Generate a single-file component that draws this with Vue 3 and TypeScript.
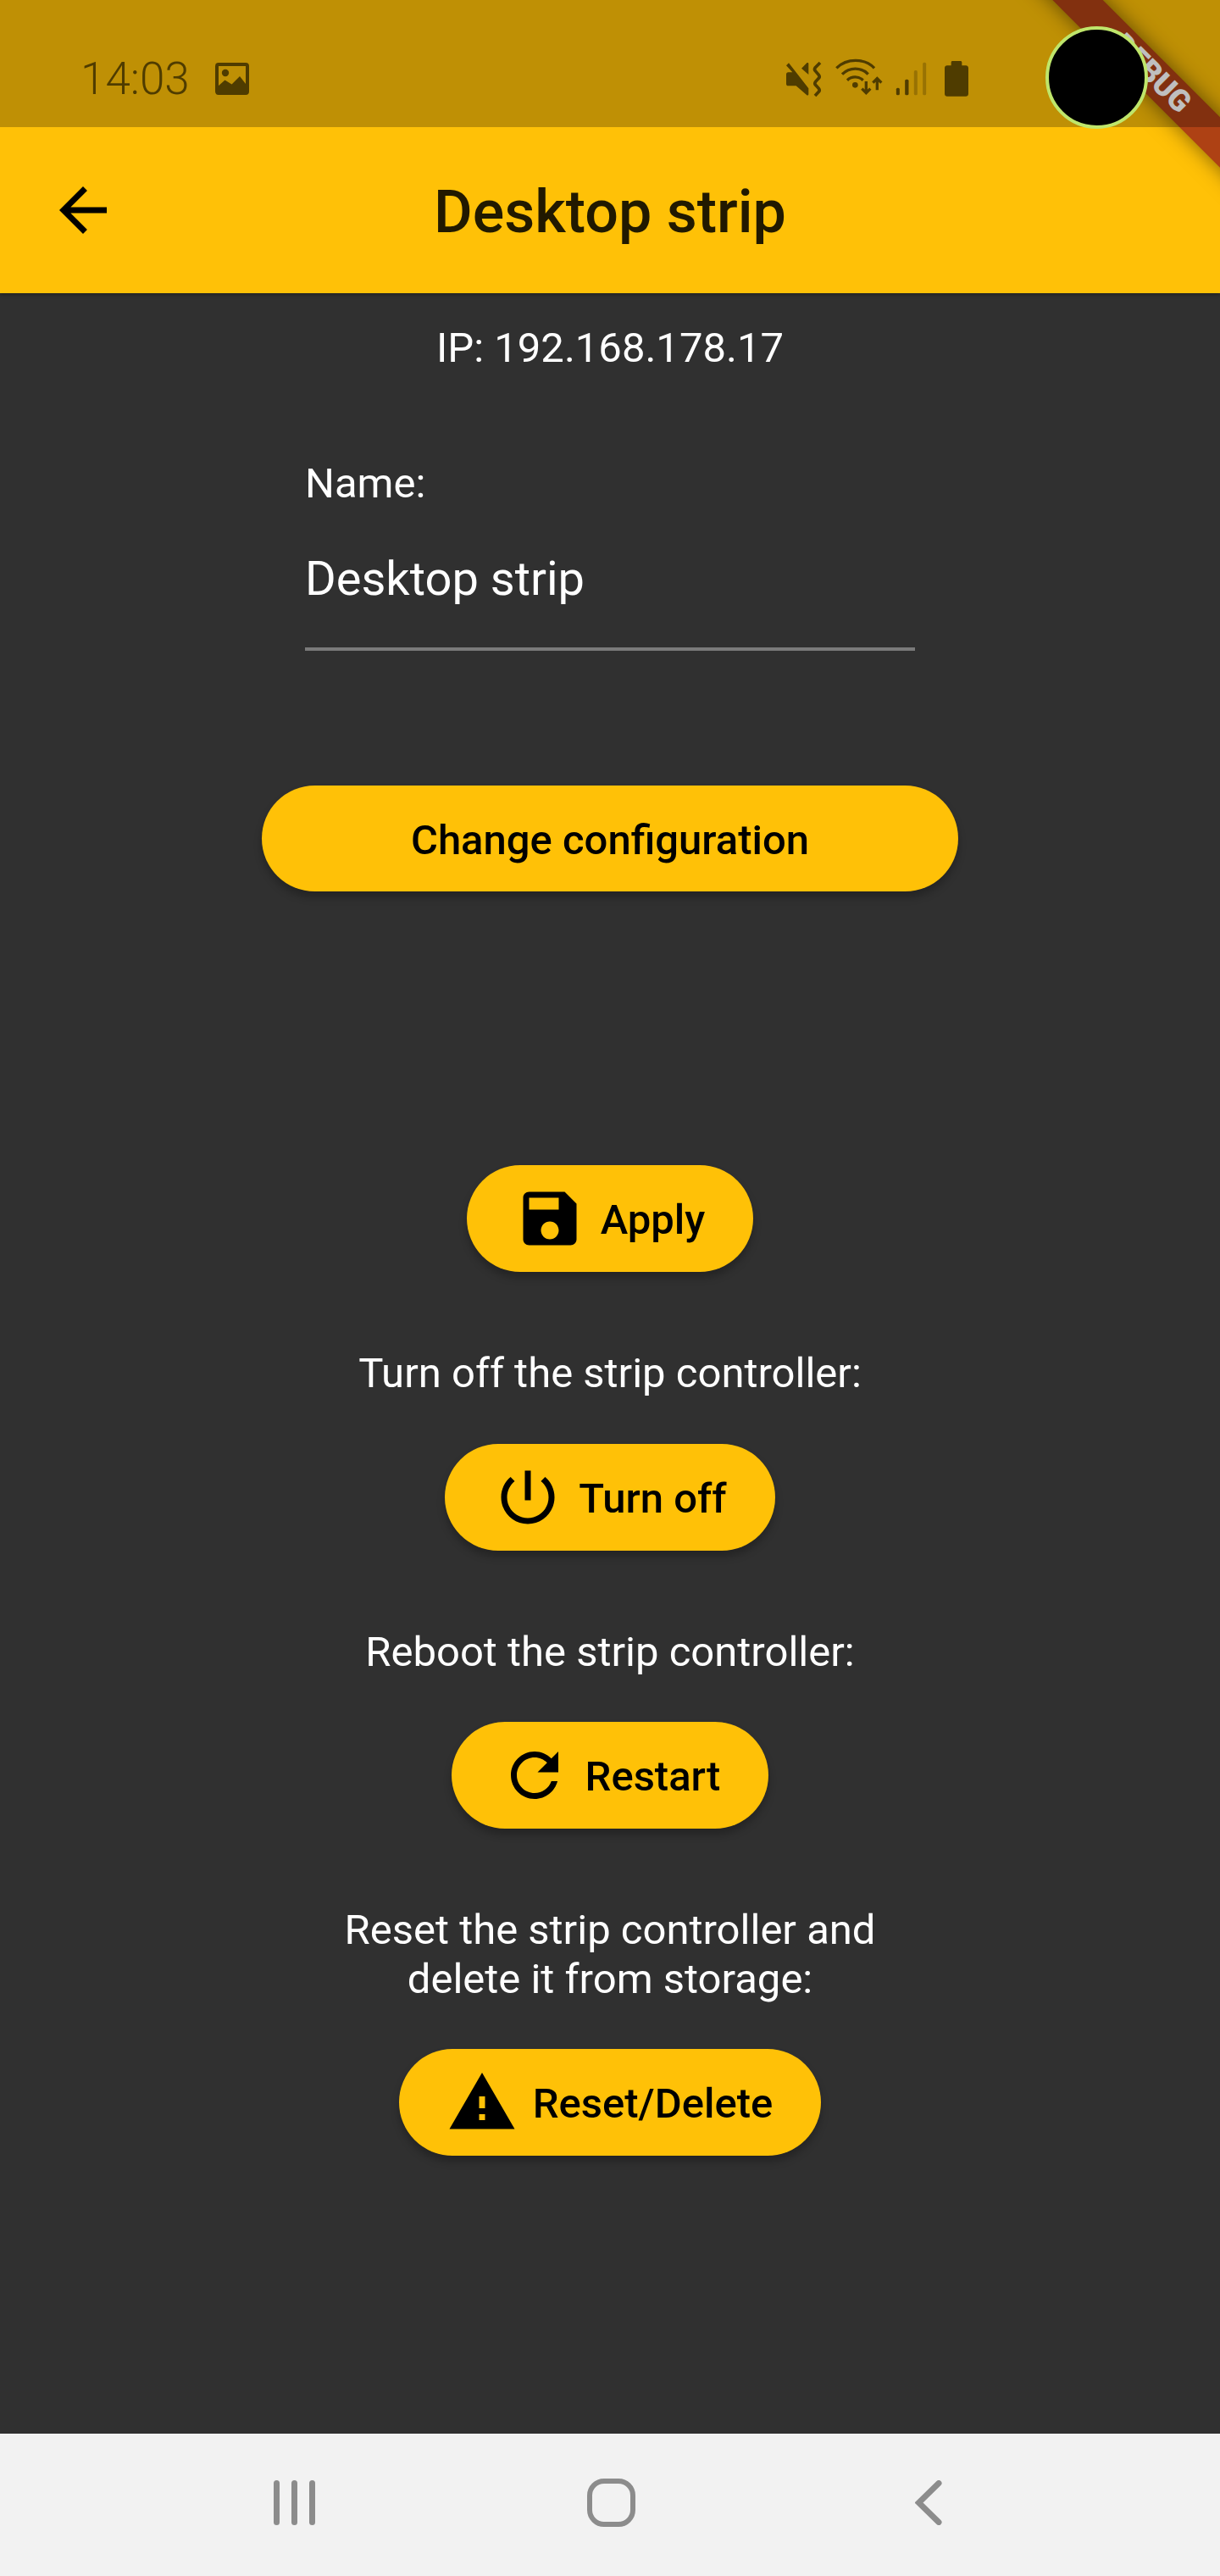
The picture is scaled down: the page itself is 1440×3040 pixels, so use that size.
<script setup lang="ts">
interface Action {
  label?: string
  text: string
  icon: string
}

const actions: Action[] = [
  {
    text: 'Apply',
    icon: 'M17 3H5c-1.11 0-2 .9-2 2v14c0 1.1.89 2 2 2h14c1.1 0 2-.9 2-2V7l-4-4zm-5 16c-1.66 0-3-1.34-3-3s1.34-3 3-3 3 1.34 3 3-1.34 3-3 3zm3-10H5V5h10v4z',
  },
  {
    label: 'Turn off the strip controller:',
    text: 'Turn off',
    icon: 'M13 3h-2v10h2V3zm4.83 2.17l-1.42 1.42C17.99 7.86 19 9.81 19 12c0 3.87-3.13 7-7 7s-7-3.13-7-7c0-2.19 1.01-4.14 2.58-5.42L6.17 5.17C4.23 6.82 3 9.26 3 12c0 4.97 4.03 9 9 9s9-4.03 9-9c0-2.74-1.23-5.18-3.17-6.83z',
  },
  {
    label: 'Reboot the strip controller:',
    text: 'Restart',
    icon: 'M17.65 6.35C16.2 4.9 14.21 4 12 4c-4.42 0-7.99 3.58-7.99 8s3.57 8 7.99 8c3.73 0 6.84-2.55 7.73-6h-2.08c-.82 2.33-3.04 4-5.65 4-3.31 0-6-2.69-6-6s2.69-6 6-6c1.66 0 3.14.69 4.22 1.78L13 11h7V4l-2.35 2.35z',
  },
  {
    label: 'Reset the strip controller and delete it from storage:',
    text: 'Reset/Delete',
    icon: 'M1 21h22L12 2 1 21zm12-3h-2v-2h2v2zm0-4h-2v-4h2v4z',
  },
]
</script>

<template>
  <div class="page">
    <header class="header">
      <div class="debug-ribbon"><span>DEBUG</span></div>

      <div class="status-bar">
        <span class="time">14:03</span>
        <svg width="40" height="38" viewBox="0 0 40 38">
          <rect x="2" y="2" width="36" height="34" rx="2" fill="none" stroke="currentColor" stroke-width="4" />
          <circle cx="12" cy="12" r="4.2" fill="currentColor" />
          <path d="M3 28l8.5-7.5 8 5 9.5-9.5 7 9V37H3z" fill="currentColor" />
        </svg>

        <div class="status-icons">
          <svg width="43" height="43" viewBox="83 90 129 129" fill="currentColor">
            <path d="M92 97l-9 9 22 24H90c-4 0-7 3-7 7v34c0 4 3 7 7 7h28l38 33c3 2 6 0 6-4v-20z" />
            <path d="M137 116l19-19c2-2 6-1 6 3v38z" />
            <path
              d="M203 96l-17 17c-3 4-3 9 0 12l12 14c3 4 3 9 0 12l-11 12c-3 4-3 9 0 12l11 12c3 4 3 9 0 12l-13 14"
              fill="none"
              stroke="currentColor"
              stroke-width="11"
            />
          </svg>
          <svg class="status-wifi" width="57" height="50" viewBox="255 88 171 150">
            <g fill="none" stroke="currentColor" stroke-width="10">
              <path d="M262 125c36-36 100-36 134 0" />
              <path d="M282 147c26-26 68-26 92 0" />
              <path d="M300 168c16-15 40-15 56 0" />
              <path d="M367 172v40M352 198l15 15 15-15" />
              <path d="M406 203v-40M391 177l15-15 15 15" />
            </g>
            <circle cx="328" cy="185" r="10" fill="currentColor" />
          </svg>
          <svg class="status-signal" width="37" height="40" viewBox="470 98 110 120" fill="currentColor">
            <rect x="472" y="190" width="12" height="26" rx="5" />
            <rect x="503" y="160" width="13" height="56" rx="5" />
            <rect x="535" y="128" width="12" height="88" rx="5" opacity="0.35" />
            <rect x="566" y="100" width="12" height="116" rx="5" opacity="0.35" />
          </svg>
          <svg class="status-battery" width="28" height="42" viewBox="645 92 84 126" fill="currentColor">
            <path d="M668 108V97c0-3 2-5 5-5h28c3 0 5 2 5 5v11h14c5 0 9 4 9 9v91c0 5-4 9-9 9h-66c-5 0-9-4-9-9v-91c0-5 4-9 9-9z" />
          </svg>
        </div>
      </div>

      <div class="app-bar">
        <button class="back-btn" type="button" aria-label="Back">
          <svg width="84" height="84" viewBox="0 0 24 24">
            <path d="M20 11H7.83l5.59-5.59L12 4l-8 8 8 8 1.41-1.41L7.83 13H20v-2z" />
          </svg>
        </button>
        <h1 class="title">Desktop strip</h1>
      </div>

      <div class="camera"></div>
    </header>

    <main class="content">
      <p class="ip">IP: 192.168.178.17</p>

      <div class="field">
        <div class="field-label">Name:</div>
        <div class="field-value">Desktop strip</div>
      </div>

      <button class="pill pill-wide" type="button">Change configuration</button>

      <div class="actions">
        <div v-for="action in actions" :key="action.text" class="action">
          <p v-if="action.label" class="action-label">{{ action.label }}</p>
          <button class="pill" type="button">
            <svg class="pill-icon" width="84" height="84" viewBox="0 0 24 24">
              <path :d="action.icon" />
            </svg>
            <span>{{ action.text }}</span>
          </button>
        </div>
      </div>
    </main>

    <nav class="nav-bar">
      <svg width="49" height="53" viewBox="0 0 49 53" fill="#8c8c8c">
        <rect x="0" y="0" width="7" height="53" rx="3.5" />
        <rect x="21" y="0" width="7" height="53" rx="3.5" />
        <rect x="42" y="0" width="7" height="53" rx="3.5" />
      </svg>
      <svg class="nav-home" width="57" height="57" viewBox="0 0 57 57">
        <rect x="3" y="3" width="51" height="51" rx="17" fill="none" stroke="#8c8c8c" stroke-width="6" />
      </svg>
      <svg class="nav-back" width="32" height="53" viewBox="0 0 32 53">
        <path d="M28 3.5L4.5 26.5 28 49.5" fill="none" stroke="#8c8c8c" stroke-width="7" stroke-linecap="round" />
      </svg>
    </nav>
  </div>
</template>

<style>
html,
body {
  margin: 0;
  background: #303030;
}
</style>

<style scoped>
.page {
  width: 1440px;
  height: 3040px;
  display: flex;
  flex-direction: column;
  overflow: hidden;
  font-family: Roboto, 'Noto Sans', sans-serif;
  background: #303030;
}

.header {
  position: relative;
  flex: none;
  background: #ffc107;
  box-shadow: 0 2px 4px rgba(0, 0, 0, 0.3);
  z-index: 1;
}

.status-bar {
  position: relative;
  z-index: 2;
  height: 150px;
  box-sizing: border-box;
  padding: 36px 0 0 95px;
  display: flex;
  align-items: center;
  background: rgba(0, 0, 0, 0.25);
  color: #4f3c00;
}

.time {
  width: 159px;
  font-size: 53px;
  line-height: 1;
  font-weight: 300;
}

.status-icons {
  margin-left: 634px;
  display: flex;
  align-items: center;
}

.status-wifi {
  margin-left: 14px;
}

.status-signal {
  margin-left: 15px;
}

.status-battery {
  margin-left: 21px;
}

.app-bar {
  height: 196px;
  display: grid;
  grid-template-columns: 196px 1fr 196px;
  align-items: center;
}

.back-btn {
  padding: 0 0 0 56px;
  border: none;
  background: none;
  display: flex;
  align-items: center;
}

.back-btn svg {
  fill: #000;
}

.title {
  margin: 0;
  padding-top: 3px;
  text-align: center;
  font-size: 70px;
  font-weight: 500;
  color: rgba(0, 0, 0, 0.87);
}

.debug-ribbon {
  position: absolute;
  z-index: 1;
  left: 1149px;
  top: 66px;
  width: 420px;
  height: 42px;
  transform: rotate(45deg);
  background: #ae4114;
  box-shadow: 0 0 24px rgba(0, 0, 0, 0.5);
  display: flex;
  align-items: center;
  justify-content: center;
  color: #fff;
  font-size: 35.7px;
  font-weight: 900;
  line-height: 1;
}

.camera {
  position: absolute;
  z-index: 3;
  left: 1234px;
  top: 31px;
  width: 121px;
  height: 121px;
  box-sizing: border-box;
  border: 4px solid #bfe66b;
  border-radius: 50%;
  background: #000;
}

.content {
  flex: 1;
  display: flex;
  flex-direction: column;
  align-items: center;
  padding-top: 36px;
  color: #fff;
  line-height: 57.4px;
}

.ip {
  margin: 0;
  font-size: 49px;
}

.field {
  width: 720px;
  margin-top: 103px;
  border-bottom: 4px solid #7a7a7a;
}

.field-label {
  font-size: 49px;
}

.field-value {
  margin-top: 51px;
  padding-bottom: 48px;
  font-size: 56px;
  line-height: 65.6px;
}

.pill {
  height: 126px;
  box-sizing: border-box;
  padding: 3px 57px 0 56px;
  display: flex;
  align-items: center;
  justify-content: center;
  border: none;
  border-radius: 63px;
  background: #ffc107;
  color: #000;
  font-family: inherit;
  font-size: 49px;
  font-weight: 500;
  box-shadow: 0 7px 10px rgba(0, 0, 0, 0.25);
}

.pill-wide {
  width: 822px;
  height: 125px;
  margin-top: 159px;
  padding: 3px 0 0;
}

.pill-icon {
  flex: none;
  margin: -3px 18px 0 0;
  fill: #000;
}

.actions {
  margin-top: 323px;
  display: flex;
  flex-direction: column;
  align-items: center;
  gap: 91px;
}

.action {
  display: flex;
  flex-direction: column;
  align-items: center;
  gap: 54px;
}

.action-label {
  margin: 0;
  max-width: 720px;
  text-align: center;
  font-size: 49px;
}

.nav-bar {
  flex: none;
  height: 168px;
  box-sizing: border-box;
  padding: 0 0 6px 323px;
  display: flex;
  align-items: center;
  background: #f2f2f2;
}

.nav-home {
  margin-left: 321px;
}

.nav-back {
  margin-left: 330px;
}
</style>
